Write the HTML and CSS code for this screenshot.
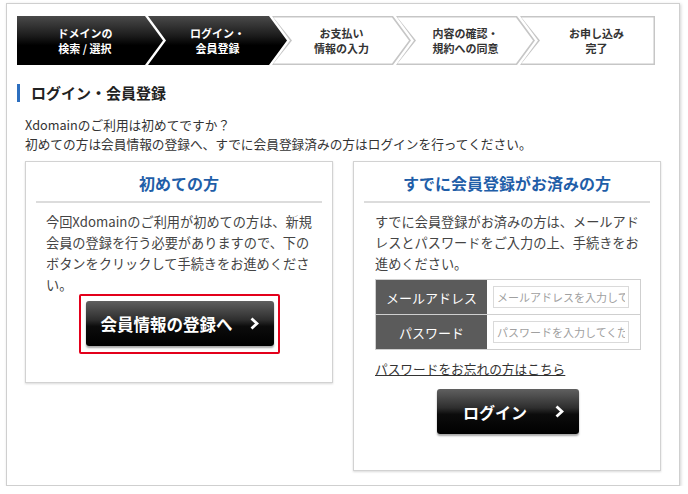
FILE: index.html
```html
<!DOCTYPE html>
<html lang="ja">
<head>
<meta charset="utf-8">
<title>ログイン・会員登録</title>
<link rel="stylesheet" href="styles.css">
</head>
<body>
<div class="frame">
  <div class="steps">
    <div class="step first on"><div class="step-in"><span>ドメインの<br>検索 / 選択</span></div></div>
    <div class="step on"><div class="step-in"><span>ログイン・<br>会員登録</span></div></div>
    <div class="step off"><div class="step-in"><span>お支払い<br>情報の入力</span></div></div>
    <div class="step off"><div class="step-in"><span>内容の確認・<br>規約への同意</span></div></div>
    <div class="step last off"><div class="step-in"><span>お申し込み<br>完了</span></div></div>
  </div>

  <h1 class="heading">ログイン・会員登録</h1>
  <p class="intro">Xdomainのご利用は初めてですか？<br>初めての方は会員情報の登録へ、すでに会員登録済みの方はログインを行ってください。</p>

  <div class="boxes">
    <section class="box">
      <h2 class="box-title">初めての方</h2>
      <div class="box-body">
        <p class="box-text">今回Xdomainのご利用が初めての方は、新規<br>会員の登録を行う必要がありますので、下の<br>ボタンをクリックして手続きをお進めくださ<br>い。</p>
        <div class="highlight">
          <a class="btn btn-register" href="#">会員情報の登録へ<svg class="chev" width="9" height="13" viewBox="0 0 9 13"><polyline points="1.5,1.5 7,6.5 1.5,11.5" fill="none" stroke="#fff" stroke-width="2.8" stroke-linejoin="miter"/></svg></a>
        </div>
      </div>
    </section>

    <section class="box">
      <h2 class="box-title">すでに会員登録がお済みの方</h2>
      <div class="box-body">
        <p class="box-text">すでに会員登録がお済みの方は、メールアド<br>レスとパスワードをご入力の上、手続きをお<br>進めください。</p>
        <table class="login-table">
          <tr>
            <th>メールアドレス</th>
            <td><input class="field" type="text" placeholder="メールアドレスを入力してください"></td>
          </tr>
          <tr>
            <th>パスワード</th>
            <td><input class="field" type="password" placeholder="パスワードを入力してください"></td>
          </tr>
        </table>
        <a class="forgot" href="#">パスワードをお忘れの方はこちら</a>
        <div class="login-wrap">
          <a class="btn btn-login" href="#">ログイン<svg class="chev" width="9" height="13" viewBox="0 0 9 13"><polyline points="1.5,1.5 7,6.5 1.5,11.5" fill="none" stroke="#fff" stroke-width="2.8" stroke-linejoin="miter"/></svg></a>
        </div>
      </div>
    </section>
  </div>
</div>
</body>
</html>
```

FILE: styles.css
```css
html, body {
  margin: 0;
  padding: 0;
  background: #fff;
}

body {
  font-family: "Noto Sans CJK JP", "Noto Sans", sans-serif;
  color: #333;
}

.frame {
  box-sizing: border-box;
  width: 674px;
  height: 483px;
  margin: 3px 0 0 6px;
  padding: 12px 10px 0 10px;
  border: 1px solid #cfcfcf;
  box-shadow: 1px 1px 3px rgba(0, 0, 0, 0.18);
}

/* ---------- steps ---------- */
.steps {
  display: flex;
  height: 49px;
}

.step {
  height: 49px;
  width: 139px;
  flex: none;
  margin-left: -15px;
  clip-path: polygon(0 0, calc(100% - 18px) 0, 100% 50%, calc(100% - 18px) 100%, 0 100%, 18px 50%);
}

.step.first {
  width: 146px;
  margin-left: 0;
  clip-path: polygon(0 0, calc(100% - 18px) 0, 100% 50%, calc(100% - 18px) 100%, 0 100%);
}

.step.last {
  width: 135px;
  clip-path: polygon(0 0, 100% 0, 100% 100%, 0 100%, 18px 50%);
}

.step-in {
  width: 100%;
  height: 100%;
  display: flex;
  align-items: center;
  justify-content: center;
  box-sizing: border-box;
  padding: 0 18px 0 18px;
  text-align: center;
  font-size: 11px;
  font-weight: 700;
  line-height: 15px;
}

.step.first .step-in {
  padding-left: 8px;
}

.step.last .step-in {
  padding-right: 0;
}

.step.on {
  background: linear-gradient(to bottom, #4a4a4a 0%, #1c1c1c 40%, #000 60%, #000 100%);
}

.step.on .step-in {
  color: #fff;
}

.step.off {
  background: #c6c6c6;
}

.step.off .step-in {
  background: #fff;
  color: #333;
  clip-path: polygon(1.5px 1.5px, calc(100% - 19px) 1.5px, calc(100% - 2px) 50%, calc(100% - 19px) calc(100% - 1.5px), 1.5px calc(100% - 1.5px), 20px 50%);
}

.step.last.off .step-in {
  clip-path: polygon(1.5px 1.5px, calc(100% - 1.5px) 1.5px, calc(100% - 1.5px) calc(100% - 1.5px), 1.5px calc(100% - 1.5px), 20px 50%);
}

/* ---------- heading & intro ---------- */
.heading {
  margin: 19px 0 0 0;
  padding-left: 11px;
  border-left: 3px solid #2d6fbf;
  font-size: 15px;
  line-height: 18px;
  font-weight: 700;
  color: #222;
}

.intro {
  margin: 13px 0 0 8px;
  font-size: 12.7px;
  line-height: 19px;
  color: #333;
}

/* ---------- boxes ---------- */
.boxes {
  display: flex;
  align-items: flex-start;
  gap: 20px;
  margin: 8px 0 0 8px;
}

.box {
  box-sizing: border-box;
  width: 308px;
  border: 1px solid #d2d2d2;
  box-shadow: 0 1px 2px rgba(0, 0, 0, 0.15);
  background: #fff;
}

.box-title {
  margin: 0 10px;
  padding: 11px 0 8px;
  border-bottom: 2px solid #dcdcdc;
  text-align: center;
  font-size: 16px;
  line-height: 20px;
  font-weight: 700;
  color: #1f5ea8;
}

.box-body {
  padding: 8px 20px 0 20px;
}

.box:first-child .box-body {
  padding-bottom: 28px;
}

.box:last-child .box-body {
  padding-left: 21px;
  padding-bottom: 36px;
}

.box-text {
  margin: 0;
  font-size: 13.2px;
  line-height: 21px;
  color: #444;
  white-space: nowrap;
}

/* ---------- buttons ---------- */
.highlight {
  width: fit-content;
  margin: -1px auto 0;
  padding: 5px 4px 6px 5px;
  border: 2px solid #e3001b;
  border-radius: 2px;
}

.btn {
  display: flex;
  align-items: center;
  justify-content: center;
  box-sizing: border-box;
  height: 45px;
  border-radius: 3px;
  background: linear-gradient(to bottom, #606060 0%, #2e2e2e 42%, #0c0c0c 56%, #000 100%);
  box-shadow: 0 2px 2px rgba(0, 0, 0, 0.35);
  color: #fff;
  font-weight: 700;
  text-decoration: none;
}

.btn-register {
  width: 188px;
  font-size: 16.5px;
  gap: 17px;
}

.login-wrap {
  display: flex;
  justify-content: center;
  margin-top: 11px;
}

.btn-login {
  width: 142px;
  font-size: 16px;
  gap: 28px;
  padding-left: 12px;
}

.chev {
  display: block;
  flex: none;
}

/* ---------- login table ---------- */
.login-table {
  margin-top: 5px;
  width: 266px;
  border-collapse: collapse;
  border: 1px solid #cfcfcf;
}

.login-table th {
  width: 111px;
  height: 34px;
  padding: 0;
  background: #5b5b5b;
  color: #fff;
  font-size: 13px;
  font-weight: 400;
  text-align: center;
  border-bottom: 1px solid #cfcfcf;
}

.login-table td {
  height: 34px;
  padding: 0 0 0 6px;
  border-bottom: 1px solid #cfcfcf;
}

.field {
  box-sizing: border-box;
  display: block;
  width: 136px;
  height: 22px;
  margin: 0;
  padding: 0 3px;
  border: 1px solid #dadada;
  font-family: "Noto Sans CJK JP", sans-serif;
  font-size: 11px;
  color: #333;
  outline: none;
}

.field::placeholder {
  color: #a0a0a0;
}

.forgot {
  display: block;
  margin-top: 9px;
  font-size: 12.7px;
  line-height: 19px;
  color: #333;
  text-decoration: underline;
}
```
